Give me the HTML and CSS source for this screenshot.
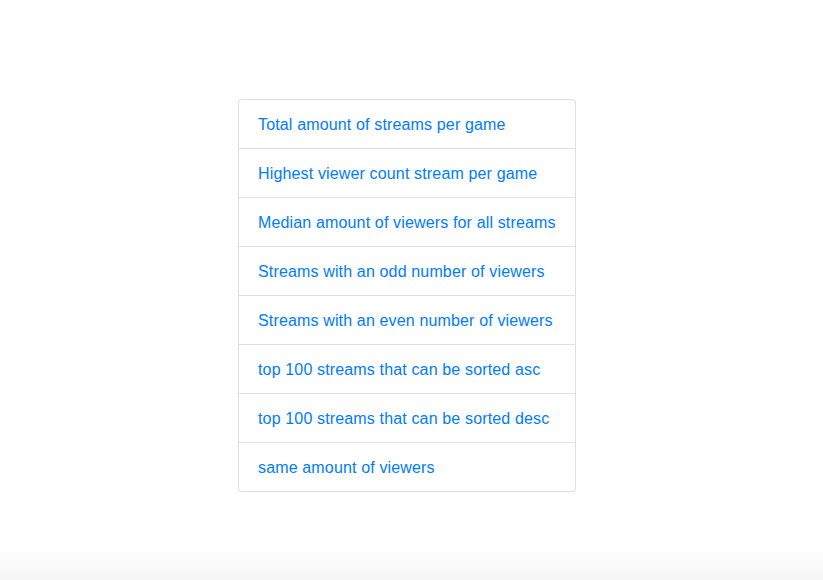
FILE: index.html
```html
<!DOCTYPE html>
<html lang="en">
<head>
<meta charset="utf-8">
<title>Streams</title>
<link rel="stylesheet" href="styles.css">
</head>
<body>
<main class="page">
  <ul class="list-group">
    <li class="list-group-item"><a href="#">Total amount of streams per game</a></li>
    <li class="list-group-item"><a href="#">Highest viewer count stream per game</a></li>
    <li class="list-group-item"><a href="#">Median amount of viewers for all streams</a></li>
    <li class="list-group-item"><a href="#">Streams with an odd number of viewers</a></li>
    <li class="list-group-item"><a href="#">Streams with an even number of viewers</a></li>
    <li class="list-group-item"><a href="#">top 100 streams that can be sorted asc</a></li>
    <li class="list-group-item"><a href="#">top 100 streams that can be sorted desc</a></li>
    <li class="list-group-item"><a href="#">same amount of viewers</a></li>
  </ul>
</main>
</body>
</html>
```
FILE: styles.css
```css
html {
  height: 100%;
  background: linear-gradient(to bottom, #ffffff 0, #ffffff 548px, #f6f6f6 580px);
}
body {
  margin: 0;
  font-family: "Liberation Sans", Arial, sans-serif;
  font-size: 16px;
  line-height: 24px;
  color: #212529;
}
.page {
  padding: 99px 0 0 238px;
}
.list-group {
  box-sizing: border-box;
  list-style: none;
  margin: 0;
  padding: 0;
  width: 338px;
  background: #fff;
  border: 1px solid rgba(0, 0, 0, 0.125);
  border-radius: 4px;
}
.list-group-item {
  padding: 13px 19px 11px;
  border-top: 1px solid rgba(0, 0, 0, 0.125);
}
.list-group-item:first-child {
  border-top: 0;
}
.list-group-item a {
  color: #007bff;
  text-decoration: none;
  white-space: nowrap;
  letter-spacing: 0.15px;
}
```
